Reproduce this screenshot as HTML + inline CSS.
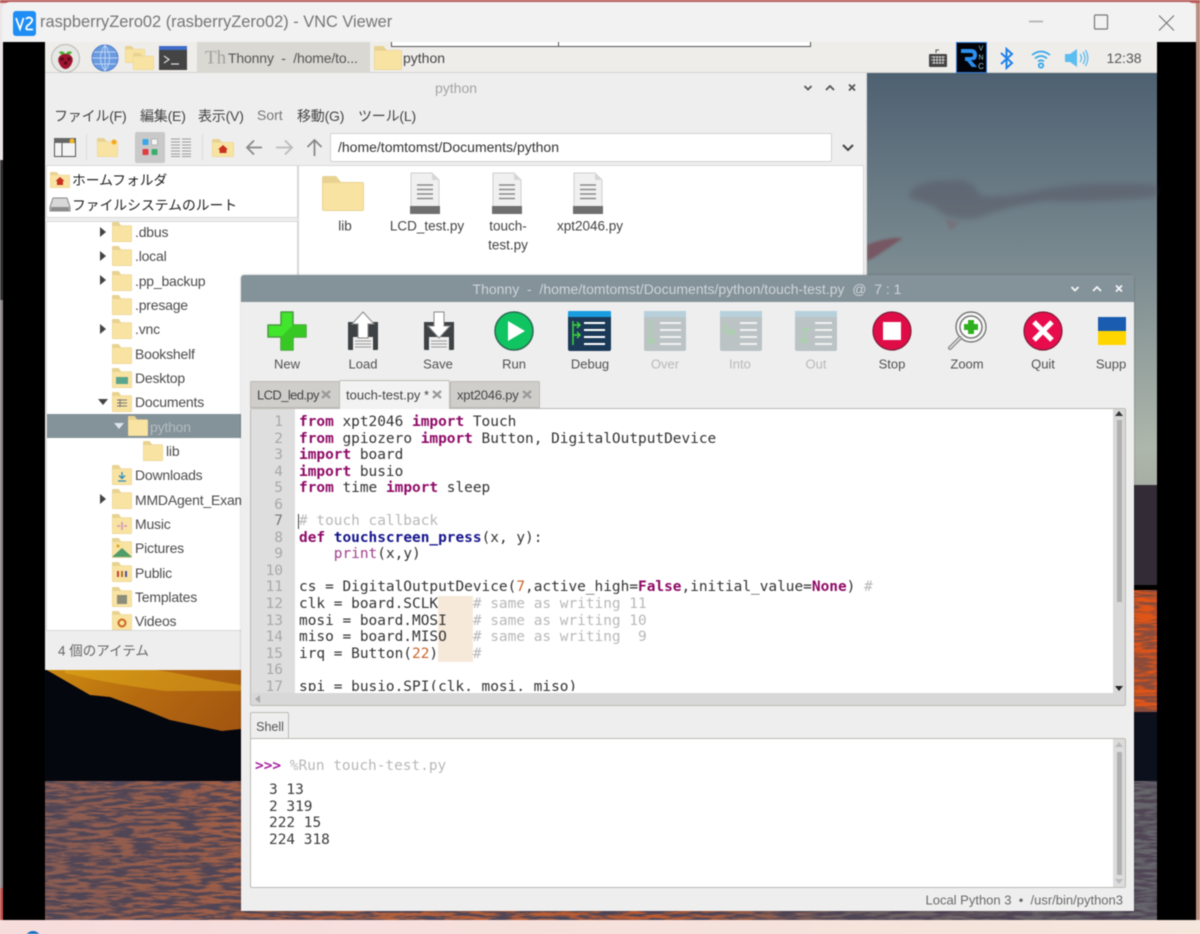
<!DOCTYPE html>
<html lang="ja">
<head>
<meta charset="utf-8">
<title>raspberryZero02 - VNC Viewer</title>
<style>
html,body{margin:0;padding:0;width:1200px;height:934px;overflow:hidden;background:#f5e0dc}
#r{position:absolute;left:0;top:0;width:1200px;height:934px;overflow:hidden;filter:blur(.4px);font-family:"Liberation Sans","Noto Sans CJK JP",sans-serif}
.b{position:absolute}
.t,.c{position:absolute;white-space:pre;line-height:1;font-size:14px;color:#444}
.t{transform:translate(0,-50%)}
.c{transform:translate(-50%,-50%)}
svg{position:absolute;overflow:visible}
pre{position:absolute;margin:0;font-family:"DejaVu Sans Mono","Liberation Mono",monospace;font-size:14.45px;line-height:16.55px;color:#333}
.k{color:#8f0a66;font-weight:bold}
.f{color:#14148c;font-weight:bold}
.g{color:#b8b8b8}
.n{color:#c8642a}
.p{color:#a0408c}
.tr{font-size:14px;color:#4c4c4c;letter-spacing:-.2px}
.l{font-size:13px;color:#505050}
.d{font-size:13px;color:#b9b9b9}
.fl{font-size:13.5px}
</style>
</head>
<body>
<div id="r">
<svg width="0" height="0" style="position:absolute">
<defs>
<symbol id="fo" viewBox="0 0 42 35" preserveAspectRatio="none"><path d="M0 2Q0 0 2 0H14L19 6H40Q42 6 42 8V33Q42 35 40 35H2Q0 35 0 33Z" fill="#e8d291"/><path d="M1 7H41V33Q41 34 40 34H2Q1 34 1 33Z" fill="#f9e3a2"/></symbol>
<symbol id="doc" viewBox="0 0 30 42"><path d="M1 1H22L29 8V41H1Z" fill="#f0f0f0" stroke="#cfcfcf"/><path d="M22 1V8H29Z" fill="#d6d6d6"/><path d="M7 13H23M7 17.500H23M7 22H23M7 26.500H23" stroke="#8a8a8a" stroke-width="1.500"/><path d="M0 34H30V42H0Z" fill="#6f6f6f"/></symbol>
<filter id="w" x="0" y="0" width="100%" height="100%"><feTurbulence type="fractalNoise" baseFrequency=".045 .3" numOctaves="4" seed="11"/><feColorMatrix values="0 0 0 0 .08 0 0 0 0 .06 0 0 0 0 .09 4.500 0 0 0 -1.750"/></filter>
<filter id="s1" x="-10%" y="-30%" width="120%" height="160%"><feGaussianBlur stdDeviation="3"/></filter>
<filter id="s2" x="-30%" y="-50%" width="160%" height="200%"><feGaussianBlur stdDeviation="1.200"/></filter>
<linearGradient id="wg" x1="0" x2="1" y1="0" y2="0"><stop offset="0" stop-color="#8a5c52"/><stop offset=".3" stop-color="#b0603e"/><stop offset=".55" stop-color="#bd5a30"/><stop offset=".72" stop-color="#6e6062"/><stop offset="1" stop-color="#66666c"/></linearGradient>
<linearGradient id="sky" x1="0" x2="0" y1="0" y2="1"><stop offset="0" stop-color="#4e6172"/><stop offset=".45" stop-color="#7a8a90"/><stop offset=".9" stop-color="#aeb7ab"/><stop offset="1" stop-color="#a6aca2"/></linearGradient>
<linearGradient id="og" x1="0" x2="1" y1="0" y2=".6"><stop offset="0" stop-color="#cf9010"/><stop offset=".5" stop-color="#b66a10"/><stop offset="1" stop-color="#a05410"/></linearGradient>
</defs>
</svg>

<!-- outer edges -->
<div class="b" style="left:0;top:0;width:1200px;height:3px;background:#b85c5c"></div>
<div class="b" style="left:0;top:3px;width:3px;height:917px;background:#e8e8e8"></div>
<div class="b" style="left:0;top:160px;width:3px;height:140px;background:#333"></div>
<div class="b" style="left:0;top:300px;width:3px;height:590px;background:#888"></div>
<div class="b" style="left:0;top:888px;width:3px;height:32px;background:#c0504c"></div>
<div class="b" style="left:1196px;top:3px;width:4px;height:917px;background:#b88f80"></div>
<div class="b" style="left:0;top:920px;width:1200px;height:14px;background:linear-gradient(90deg,#f7dcdc,#f5e6dc)"></div>
<div class="b" style="left:25px;top:931px;width:16px;height:16px;border-radius:8px;background:#1670c8"></div>

<!-- vnc window -->
<div class="b" style="left:3px;top:42px;width:1193px;height:878px;background:#000"></div>
<div class="b" style="left:2px;top:2px;width:1194px;height:40px;background:#f2f2f2;border-radius:8px 8px 0 0"></div>
<svg style="left:13px;top:11px" width="23" height="25" viewBox="0 0 23 25"><rect width="23" height="25" rx="3" fill="#1e8ef4"/><path d="M3 7L7 18L10.500 7M13 8Q16 5 18.500 7.500T14 15Q12.500 18 14 18.500H20" fill="none" stroke="#fff" stroke-width="1.800"/></svg>
<span class="t" style="left:40px;top:22px;font-size:16.4px;color:#767676">raspberryZero02 (rasberryZero02) - VNC Viewer</span>
<svg style="left:1029px;top:14px" width="146" height="20" viewBox="0 0 146 20" fill="none" stroke="#777" stroke-width="1.200"><path d="M0 7.500H14" stroke="#aaa" stroke-width="1.500"/><rect x="65.500" y="1" width="13" height="14" rx="1"/><path d="M130 1.500L145 16.500M145 1.500L130 16.500"/></svg>

<!-- wallpaper -->
<svg style="left:45px;top:73px" width="1112" height="847" viewBox="0 0 1112 847">
<rect width="1112" height="417" fill="url(#sky)"/>
<rect y="412" width="1112" height="100" fill="#332c36"/>
<rect y="517" width="1112" height="122" fill="#df5518"/>
<rect y="517" width="1112" height="122" filter="url(#w)" opacity=".6"/>
<rect y="639" width="1112" height="70" fill="#0b101c"/>
<rect y="580" width="200" height="130" fill="url(#og)"/>
<path d="M20 597Q90 592 130 600T196 612V618H120Q60 610 20 600Z" fill="#e6b41c" opacity=".45"/>
<path d="M0 596L45 622L65 624L95 635L125 647L177 658L196 656V710H0Z" fill="#05070f"/>
<rect y="708" width="1112" height="139" fill="url(#wg)"/>
<rect y="708" width="1112" height="139" filter="url(#w)"/>
<path d="M865 118Q880 106 905 108Q925 104 935 122Q950 126 1000 116Q1040 108 1112 112V124Q1050 130 1000 128Q960 134 930 146Q900 148 890 134Q875 128 865 126Z" fill="#4a3e4c" opacity=".3" filter="url(#s1)"/>
<path d="M822 172Q840 164 858 165Q845 174 830 184L822 188Z" fill="#77505c" opacity=".85" filter="url(#s2)"/>
<path d="M900 146L915 150L905 158Z" fill="#7a5a64" opacity=".35" filter="url(#s2)"/>
</svg>

<!-- panel -->
<div class="b" style="left:45px;top:42px;width:1112px;height:31px;background:#efedea;border-bottom:1px solid #d6d4d0;box-sizing:border-box"></div>
<div class="b" style="left:391px;top:42px;width:420px;height:5px;background:#fff;border:1px solid #555;border-top:0;box-sizing:border-box"></div>
<div class="b" style="left:558px;top:42px;width:1px;height:5px;background:#555"></div>
<div class="b" style="left:197px;top:42px;width:173px;height:31px;background:#d9d8d3"></div>
<svg style="left:51px;top:44px" width="29" height="29" viewBox="0 0 29 29"><circle cx="14.500" cy="14.500" r="14" fill="#e6e8e4" stroke="#b8b8b8"/><path d="M8 8Q12 6 14.500 10Q17 6 21 8Q19 12 14.500 11Q10 12 8 8Z" fill="#4fae38"/><path d="M14.500 10C21 10 23 15 21 19C19 24 16 25 14.500 25C13 25 10 24 8 19C6 15 8 10 14.500 10Z" fill="#a01430"/><circle cx="11" cy="15" r="1.800" fill="#5c0a1c"/><circle cx="18" cy="15" r="1.800" fill="#5c0a1c"/><circle cx="14.500" cy="19" r="1.800" fill="#5c0a1c"/></svg>
<svg style="left:91px;top:44px" width="28" height="28" viewBox="0 0 28 28" fill="none"><circle cx="14" cy="14" r="13" fill="#6a9ae0" stroke="#4c7cc6"/><path d="M1 14H27M3 8H25M3 20H25M14 1V27M14 1Q5 14 14 27M14 1Q23 14 14 27" stroke="#bcd4f4"/></svg>
<svg style="left:125px;top:46px" width="29" height="24" viewBox="0 0 29 24"><use href="#fo" width="20" height="17"/><use href="#fo" x="8" y="7" width="21" height="17"/></svg>
<svg style="left:159px;top:46px" width="28" height="24" viewBox="0 0 28 24"><rect width="28" height="24" fill="#444"/><rect width="28" height="4" fill="#3f6cc8"/><path d="M5 10L10 13.500L5 17M12 18H20" fill="none" stroke="#ddd" stroke-width="1.200"/></svg>
<span class="t" style="left:205px;top:58px;font-family:'Liberation Serif',serif;font-size:19px;color:#a2a29e">Th</span>
<span class="t" style="left:228px;top:58px;font-size:14px;color:#555;letter-spacing:-.15px">Thonny  -  /home/to...</span>
<svg style="left:374px;top:46px" width="28" height="24"><use href="#fo" width="28" height="24"/></svg>
<span class="t" style="left:403px;top:58px;color:#444">python</span>
<svg style="left:929px;top:49px" width="18" height="18" viewBox="0 0 18 18"><path d="M7 4V1H10" fill="none" stroke="#555"/><rect y="5" width="18" height="13" rx="1" fill="#444"/><path d="M2 8H16M2 11H16M3 14H15M5 7V15M8 7V15M11 7V15M14 7V15" stroke="#ddd" stroke-width=".8"/></svg>
<svg style="left:956px;top:42px" width="31" height="31" viewBox="0 0 31 31"><rect x=".5" y=".5" width="30" height="30" fill="#02040a" stroke="#2a78d8"/><path d="M5 7H15Q21 7 21 13T15 18L21 25H16L11 19H9V15H15Q17 15 17 13T15 11H5Z" fill="#2b8ff0"/></svg>
<span class="c" style="left:981px;top:49px;font-size:7px;color:#9cc">V</span>
<span class="c" style="left:981px;top:58px;font-size:7px;color:#9cc">N</span>
<span class="c" style="left:981px;top:67px;font-size:8px;color:#9cc">C</span>
<svg style="left:999px;top:47px" width="16" height="23" viewBox="0 0 16 23" fill="none" stroke="#1e82ea" stroke-width="2"><path d="M2 6L13 16L7.500 21V2L13 7L2 17"/></svg>
<svg style="left:1031px;top:49px" width="20" height="20" viewBox="0 0 20 20" fill="none" stroke="#35a8ec" stroke-width="1.600"><path d="M1 6Q10 -1 19 6M4 9.500Q10 4.500 16 9.500M7 12.500Q10 10 13 12.500"/><circle cx="10" cy="16.500" r="2.200" stroke-width="1.800"/></svg>
<svg style="left:1065px;top:48px" width="24" height="20" viewBox="0 0 24 20" fill="none"><path d="M0 6H5L12 1V19L5 14H0Z" fill="#5cbdf0"/><path d="M15 6Q18 10 15 14M18 4Q22 10 18 16M20.500 2Q25 10 20.500 18" stroke="#5cbdf0" stroke-width="1.300"/></svg>
<span class="c" style="left:1124px;top:58px;color:#555">12:38</span>

<!-- file manager -->
<div class="b" style="left:45px;top:73px;width:822px;height:597px;background:#eeeeee;border-right:1px solid #ddd;box-sizing:border-box"></div>
<span class="c" style="left:456px;top:88px;color:#a4a4a4">python</span>
<svg style="left:803px;top:83px" width="56" height="10" viewBox="0 0 56 10" fill="none" stroke="#555" stroke-width="1.800"><path d="M1.500 3L5 6.500L8.500 3M23 7L27 3L31 7M46 1.500L52 7.500M52 1.500L46 7.500"/></svg>
<span class="t" style="left:54px;top:116px;letter-spacing:-.2px">ファイル(F)</span>
<span class="t" style="left:140px;top:116px;letter-spacing:-.2px">編集(E)</span>
<span class="t" style="left:198px;top:116px;letter-spacing:-.2px">表示(V)</span>
<span class="t" style="left:257px;top:115px;color:#777">Sort</span>
<span class="t" style="left:297px;top:116px;letter-spacing:-.2px">移動(G)</span>
<span class="t" style="left:358px;top:116px;letter-spacing:-.2px">ツール(L)</span>

<svg style="left:54px;top:138px" width="22" height="19" viewBox="0 0 22 19"><rect x=".5" y=".5" width="21" height="18" fill="#f4f4f4" stroke="#555"/><rect width="22" height="5" fill="#666"/><path d="M8 5V18" stroke="#555"/><circle cx="18" cy="3" r="2.500" fill="#f4b820"/></svg>
<div class="b" style="left:86px;top:134px;width:1px;height:26px;background:#dcdcdc"></div>
<svg style="left:97px;top:138px" width="21" height="19"><use href="#fo" width="21" height="19"/><circle cx="17" cy="4" r="2.500" fill="#f4a820"/></svg>
<div class="b" style="left:135px;top:132px;width:30px;height:31px;background:#c9c9c9;border-radius:2px"></div>
<svg style="left:142px;top:138px" width="16" height="19" viewBox="0 0 16 19"><rect x=".5" y="1" width="6" height="6" rx="1" fill="#3ea6e8"/><rect x="9.500" y="1" width="6" height="6" rx="1" fill="#f4f4f4" stroke="#888" stroke-width=".5"/><rect x=".5" y="11" width="6" height="6" rx="1" fill="#e03c40"/><rect x="9.500" y="11" width="6" height="6" rx="1" fill="#3cae6c"/></svg>
<svg style="left:171px;top:138px" width="20" height="19" viewBox="0 0 20 19"><path d="M0 1H9M0 4H9M0 7H9M0 10H9M0 13H9M0 16H9M0 18.500H9M11 1H20M11 4H20M11 7H20M11 10H20M11 13H20M11 16H20M11 18.500H20" stroke="#9a9a9a"/></svg>
<div class="b" style="left:202px;top:134px;width:1px;height:26px;background:#dcdcdc"></div>
<svg style="left:212px;top:139px" width="22" height="18" viewBox="0 0 22 18"><use href="#fo" width="22" height="18"/><path d="M11 6L16 10.500H14.500V14H7.500V10.500H6Z" fill="#c8321e"/></svg>
<svg style="left:245px;top:138px" width="80" height="19" viewBox="0 0 80 19" fill="none" stroke-width="1.800"><path d="M17 9.500H2M9 2.500L2 9.500L9 16.500" stroke="#888"/><path d="M31 9.500H47M40 2.500L47 9.500L40 16.500" stroke="#bbb"/><path d="M69.500 18V2M62.500 9L69.500 2L76.500 9" stroke="#888"/></svg>
<div class="b" style="left:330px;top:133px;width:502px;height:29px;background:#fff;border:1px solid #d2d2d2;box-sizing:border-box;border-radius:2px"></div>
<span class="t" style="left:338px;top:147px;color:#333">/home/tomtomst/Documents/python</span>
<svg style="left:842px;top:143px" width="12" height="9" viewBox="0 0 12 9" fill="none" stroke="#444" stroke-width="2"><path d="M1 2L6 7L11 2"/></svg>

<div class="b" style="left:47px;top:166px;width:250px;height:51px;background:#fff;box-shadow:0 0 0 1px #d8d8d8"></div>
<svg style="left:50px;top:172px" width="20" height="16" viewBox="0 0 20 16"><use href="#fo" width="20" height="16"/><path d="M10 5L14.500 9H13V13H7V9H5.500Z" fill="#c8321e"/></svg>
<span class="t" style="left:72px;top:181px;color:#222;font-size:13.800px">ホームフォルダ</span>
<svg style="left:50px;top:197px" width="20" height="15" viewBox="0 0 20 15"><path d="M3 1H17L20 10V14H0V10Z" fill="#d8d8d8" stroke="#888"/><rect x="1" y="10" width="18" height="4" fill="#8c8c8c"/></svg>
<span class="t" style="left:72px;top:206px;color:#222;font-size:13.800px">ファイルシステムのルート</span>

<div class="b" style="left:47px;top:222px;width:250px;height:408px;background:#fff;box-shadow:0 0 0 1px #d8d8d8"></div>
<div class="b" style="left:47px;top:414px;width:250px;height:24px;background:#84929a"></div>

<svg style="left:100px;top:226px" width="7" height="12"><path d="M0 1L6 6L0 11Z" fill="#444"/></svg>
<svg style="left:100px;top:250px" width="7" height="12"><path d="M0 1L6 6L0 11Z" fill="#444"/></svg>
<svg style="left:100px;top:274px" width="7" height="12"><path d="M0 1L6 6L0 11Z" fill="#444"/></svg>
<svg style="left:100px;top:323px" width="7" height="12"><path d="M0 1L6 6L0 11Z" fill="#444"/></svg>
<svg style="left:97px;top:399px" width="12" height="7"><path d="M1 0H11L6 6Z" fill="#444"/></svg>
<svg style="left:100px;top:493px" width="7" height="12"><path d="M0 1L6 6L0 11Z" fill="#444"/></svg>
<svg style="left:113px;top:423px" width="12" height="7"><path d="M1 0H11L6 6Z" fill="#dde6ec"/></svg>

<svg style="left:112px;top:222px" width="20" height="20"><use href="#fo" width="20" height="20"/></svg>
<svg style="left:112px;top:246px" width="20" height="20"><use href="#fo" width="20" height="20"/></svg>
<svg style="left:112px;top:271px" width="20" height="20"><use href="#fo" width="20" height="20"/></svg>
<svg style="left:112px;top:295px" width="20" height="20"><use href="#fo" width="20" height="20"/></svg>
<svg style="left:112px;top:319px" width="20" height="20"><use href="#fo" width="20" height="20"/></svg>
<svg style="left:112px;top:344px" width="20" height="20"><use href="#fo" width="20" height="20"/></svg>
<svg style="left:112px;top:368px" width="20" height="20"><use href="#fo" width="20" height="20"/><rect x="4" y="9" width="12" height="7" fill="#5aa58c"/></svg>
<svg style="left:112px;top:392px" width="20" height="20"><use href="#fo" width="20" height="20"/><path d="M5 8H15M5 11H15M5 14H15M8 7V15" stroke="#777"/></svg>
<svg style="left:128px;top:416px" width="20" height="20"><use href="#fo" width="20" height="20"/></svg>
<svg style="left:143px;top:441px" width="20" height="20"><use href="#fo" width="20" height="20"/></svg>
<svg style="left:112px;top:465px" width="20" height="20"><use href="#fo" width="20" height="20"/><path d="M10 7V13M7 10.500L10 13.500L13 10.500M6 16H14" fill="none" stroke="#2a8cc0" stroke-width="1.300"/></svg>
<svg style="left:112px;top:489px" width="20" height="20"><use href="#fo" width="20" height="20"/></svg>
<svg style="left:112px;top:514px" width="20" height="20"><use href="#fo" width="20" height="20"/><path d="M5 12H8M12 12H15M10 8V16" stroke="#d090c0" stroke-width="1.500"/></svg>
<svg style="left:112px;top:538px" width="20" height="20"><use href="#fo" width="20" height="20"/><path d="M0 19L10 10L20 19Z" fill="#4f9c68"/><circle cx="6" cy="8" r="1.500" fill="#e0a020"/></svg>
<svg style="left:112px;top:562px" width="20" height="20"><use href="#fo" width="20" height="20"/><path d="M6 9V15" stroke="#c04040" stroke-width="2"/><path d="M10 9V15" stroke="#b07020" stroke-width="2"/><path d="M14 9V15" stroke="#5050a0" stroke-width="2"/></svg>
<svg style="left:112px;top:587px" width="20" height="20"><use href="#fo" width="20" height="20"/><rect x="5" y="8" width="10" height="9" fill="#8c8c7a"/></svg>
<svg style="left:112px;top:611px" width="20" height="19"><use href="#fo" width="20" height="19"/><circle cx="10" cy="12" r="3.500" fill="none" stroke="#cc6a20" stroke-width="2"/></svg>

<span class="t tr" style="left:135px;top:232px">.dbus</span>
<span class="t tr" style="left:135px;top:256px">.local</span>
<span class="t tr" style="left:135px;top:281px">.pp_backup</span>
<span class="t tr" style="left:135px;top:305px">.presage</span>
<span class="t tr" style="left:135px;top:329px">.vnc</span>
<span class="t tr" style="left:135px;top:354px">Bookshelf</span>
<span class="t tr" style="left:135px;top:378px">Desktop</span>
<span class="t tr" style="left:135px;top:402px">Documents</span>
<span class="t tr" style="left:150px;top:427px;color:#b4bcc0">python</span>
<span class="t tr" style="left:166px;top:451px">lib</span>
<span class="t tr" style="left:135px;top:475px">Downloads</span>
<span class="t tr" style="left:135px;top:500px">MMDAgent_Exam</span>
<span class="t tr" style="left:135px;top:524px">Music</span>
<span class="t tr" style="left:135px;top:548px">Pictures</span>
<span class="t tr" style="left:135px;top:573px">Public</span>
<span class="t tr" style="left:135px;top:597px">Templates</span>
<span class="t tr" style="left:135px;top:621px">Videos</span>
<span class="t" style="left:58px;top:651px;color:#666;font-size:13.500px">4 個のアイテム</span>

<div class="b" style="left:299px;top:166px;width:564px;height:504px;background:#fff;box-shadow:0 0 0 1px #d8d8d8"></div>
<svg style="left:322px;top:176px" width="42" height="35"><use href="#fo" width="42" height="35"/></svg>
<svg style="left:410px;top:172px" width="30" height="42"><use href="#doc" width="30" height="42"/></svg>
<svg style="left:492px;top:172px" width="30" height="42"><use href="#doc" width="30" height="42"/></svg>
<svg style="left:573px;top:172px" width="30" height="42"><use href="#doc" width="30" height="42"/></svg>
<span class="c fl" style="left:345px;top:226px">lib</span>
<span class="c fl" style="left:427px;top:226px">LCD_test.py</span>
<span class="c fl" style="left:508px;top:226px">touch-</span>
<span class="c fl" style="left:508px;top:245px">test.py</span>
<span class="c fl" style="left:590px;top:226px">xpt2046.py</span>

<!-- thonny -->
<div class="b" style="left:241px;top:275px;width:893px;height:636px;background:#eeeeee;border-radius:3px 3px 0 0;box-shadow:0 0 2px rgba(0,0,0,.25)"></div>
<div class="b" style="left:241px;top:275px;width:893px;height:27px;background:#84929a;border-radius:3px 3px 0 0"></div>
<span class="c" style="left:687px;top:289px;color:#ced5d9;font-size:14px">Thonny  -  /home/tomtomst/Documents/python/touch-test.py  @  7 : 1</span>
<svg style="left:1070px;top:284px" width="56" height="10" viewBox="0 0 56 10" fill="none" stroke="#f4f6f7" stroke-width="1.800"><path d="M1.500 3L5 6.500L8.500 3M23 7L27 3L31 7M46 1.500L52 7.500M52 1.500L46 7.500"/></svg>

<!-- toolbar icons -->
<svg style="left:267px;top:311px" width="40" height="40" viewBox="0 0 40 40"><path d="M14 1H26V14H39V26H26V39H14V26H1V14H14Z" fill="#40e52c" stroke="#4a9c40" stroke-linejoin="round" stroke-width="1.500"/><path d="M26 14H39V26H26V39H14V26Z" fill="#38c826"/></svg>
<svg style="left:347px;top:311px" width="32" height="40" viewBox="0 0 32 40"><path d="M1 11H31V38Q31 39 30 39H2Q1 39 1 38Z" fill="#3e4244"/><rect x="6" y="26" width="20" height="13" fill="#eee"/><path d="M8 30H24M8 33H24M8 36H24" stroke="#999"/><path d="M16 1L27 13H21V27H11V13H5Z" fill="#fff" stroke="#888"/></svg>
<svg style="left:423px;top:311px" width="32" height="40" viewBox="0 0 32 40"><path d="M1 11H31V38Q31 39 30 39H2Q1 39 1 38Z" fill="#3e4244"/><rect x="6" y="26" width="20" height="13" fill="#eee"/><path d="M8 30H24M8 33H24M8 36H24" stroke="#999"/><path d="M11 1H21V15H27L16 27L5 15H11Z" fill="#fff" stroke="#888"/></svg>
<svg style="left:494px;top:311px" width="40" height="40" viewBox="0 0 40 40"><circle cx="20" cy="20" r="19" fill="#10c462" stroke="#2a6a50" stroke-width="1.500"/><path d="M14 10L31 20L14 30Z" fill="#fff"/></svg>
<svg style="left:568px;top:311px" width="43" height="40" viewBox="0 0 43 40"><rect width="43" height="40" rx="2" fill="#1b3a58"/><rect width="43" height="6" rx="1" fill="#1a9ce0"/><path d="M16 12H37M16 19H37M16 26H37M16 33H37" stroke="#fff" stroke-width="2"/><path d="M5 10V34M5 14H12M9 11L12 14L9 17M5 24H12M9 21L12 24L9 27" fill="none" stroke="#3ed43c" stroke-width="1.500"/></svg>
<svg style="left:644px;top:311px" width="42" height="40" viewBox="0 0 42 40"><rect width="42" height="40" rx="2" fill="#bcc3c5"/><rect width="42" height="6" fill="#b7d0dc"/><path d="M16 12H37M16 19H37M16 26H37M16 33H37" stroke="#f2f2f2" stroke-width="2"/><path d="M7 9V33M3 28L7 33L11 28" fill="none" stroke="#a8d4a8" stroke-width="1.800"/></svg>
<svg style="left:720px;top:311px" width="42" height="40" viewBox="0 0 42 40"><rect width="42" height="40" rx="2" fill="#bcc3c5"/><rect width="42" height="6" fill="#b7d0dc"/><path d="M20 12H37M20 19H37M20 26H37M20 33H37" stroke="#f2f2f2" stroke-width="2"/><path d="M5 13V21H14M10 17L14 21L10 25" fill="none" stroke="#a8d4a8" stroke-width="1.800"/></svg>
<svg style="left:795px;top:311px" width="42" height="40" viewBox="0 0 42 40"><rect width="42" height="40" rx="2" fill="#bcc3c5"/><rect width="42" height="6" fill="#b7d0dc"/><path d="M20 12H37M20 19H37M20 26H37M20 33H37" stroke="#f2f2f2" stroke-width="2"/><path d="M16 18H9V32M5 28L9 32L13 28" fill="none" stroke="#a8d4a8" stroke-width="1.800"/></svg>
<svg style="left:872px;top:311px" width="40" height="40" viewBox="0 0 40 40"><circle cx="20" cy="20" r="19" fill="#e00c48" stroke="#7a1c36" stroke-width="1.200"/><rect x="11" y="11" width="18" height="18" fill="#fff"/></svg>
<svg style="left:947px;top:311px" width="41" height="40" viewBox="0 0 41 40"><circle cx="24" cy="16" r="15" fill="#f4f4f4" stroke="#666" stroke-width="1.200"/><circle cx="24" cy="16" r="11" fill="#fff" stroke="#777" stroke-width="1.500"/><path d="M21 9H27V13H31V19H27V23H21V19H17V13H21Z" fill="#30b020"/><path d="M13 27L3 37" stroke="#888" stroke-width="4" stroke-linecap="round"/><path d="M13 27L3 37" stroke="#e4e4e4" stroke-width="1.500" stroke-linecap="round"/></svg>
<svg style="left:1023px;top:311px" width="40" height="40" viewBox="0 0 40 40"><circle cx="20" cy="20" r="19" fill="#e80c4c" stroke="#7a1c36" stroke-width="1.200"/><path d="M11 11L29 29M29 11L11 29" stroke="#fff" stroke-width="5"/></svg>
<svg style="left:1098px;top:317px" width="28" height="28" viewBox="0 0 28 28"><rect width="28" height="14" fill="#1a5cb0"/><rect y="14" width="28" height="14" fill="#ffd500"/></svg>

<span class="c l" style="left:287px;top:364px">New</span>
<span class="c l" style="left:363px;top:364px">Load</span>
<span class="c l" style="left:438px;top:364px">Save</span>
<span class="c l" style="left:514px;top:364px">Run</span>
<span class="c l" style="left:590px;top:364px">Debug</span>
<span class="c d" style="left:665px;top:364px">Over</span>
<span class="c d" style="left:740px;top:364px">Into</span>
<span class="c d" style="left:816px;top:364px">Out</span>
<span class="c l" style="left:892px;top:364px">Stop</span>
<span class="c l" style="left:967px;top:364px">Zoom</span>
<span class="c l" style="left:1043px;top:364px">Quit</span>
<span class="c l" style="left:1111px;top:364px">Supp</span>

<!-- tabs -->
<div class="b" style="left:250px;top:381px;width:90px;height:27px;background:#cfcecb;border:1px solid #bcbab4;box-sizing:border-box;border-radius:2px 2px 0 0"></div>
<div class="b" style="left:450px;top:381px;width:90px;height:27px;background:#cfcecb;border:1px solid #bcbab4;box-sizing:border-box;border-radius:2px 2px 0 0"></div>
<div class="b" style="left:339px;top:380px;width:111px;height:29px;background:#f2f2f2;border:1px solid #bcbab4;border-bottom:0;box-sizing:border-box;border-radius:2px 2px 0 0;z-index:2"></div>
<span class="t" style="left:257px;top:395px;font-size:13px;color:#444;letter-spacing:-.6px">LCD_led.py</span>
<span class="t" style="left:346px;top:395px;font-size:13px;color:#444;z-index:3">touch-test.py *</span>
<span class="t" style="left:457px;top:395px;font-size:13px;color:#444;letter-spacing:-.2px">xpt2046.py</span>
<svg style="left:321px;top:390px" width="10" height="9" fill="none" stroke="#999" stroke-width="2.200"><path d="M1 1L9 8M9 1L1 8"/></svg>
<svg style="left:432px;top:390px;z-index:3" width="10" height="9" fill="none" stroke="#999" stroke-width="2.200"><path d="M1 1L9 8M9 1L1 8"/></svg>
<svg style="left:522px;top:390px" width="10" height="9" fill="none" stroke="#999" stroke-width="2.200"><path d="M1 1L9 8M9 1L1 8"/></svg>

<!-- editor -->
<div class="b" style="left:250px;top:408px;width:876px;height:298px;background:#fff;border:1px solid #bcbab4;box-sizing:border-box;border-radius:2px"></div>
<div class="b" style="left:251px;top:409px;width:44px;height:284px;background:#dedede"></div>
<div class="b" style="left:438px;top:596px;width:35px;height:66px;background:#f6e9da"></div>
<div class="b" style="left:251px;top:693px;width:874px;height:12px;background:#d8d8d8"></div>
<div class="b" style="left:1113px;top:409px;width:12px;height:296px;background:#d8d8d8"></div>
<div class="b" style="left:1117px;top:420px;width:5px;height:182px;background:#b0b0b0"></div>
<svg style="left:1114px;top:410px" width="10" height="7"><path d="M1 6H9L5 1Z" fill="#333"/></svg>
<svg style="left:1114px;top:686px" width="10" height="6"><path d="M1 0H9L5 5Z" fill="#222"/></svg>
<svg style="left:255px;top:695px" width="6" height="9"><path d="M5 0V8L0 4Z" fill="#aaa"/></svg>
<div class="b" style="left:251px;top:409px;width:862px;height:282px;overflow:hidden">
<pre style="left:0;top:5px;width:32px;text-align:right;color:#a8a8a8;font-size:14.450px">1
2
3
4
5
6
<span style="color:#777">7</span>
8
9
10
11
12
13
14
15
16
17</pre>
<pre style="left:48px;top:5px"><span class="k">from</span> xpt2046 <span class="k">import</span> Touch
<span class="k">from</span> gpiozero <span class="k">import</span> Button, DigitalOutputDevice
<span class="k">import</span> board
<span class="k">import</span> busio
<span class="k">from</span> time <span class="k">import</span> sleep

<span class="g"># touch callback</span>
<span class="k">def</span> <span class="f">touchscreen_press</span>(x, y):
    <span class="p">print</span>(x,y)

cs = DigitalOutputDevice(<span class="n">7</span>,active_high=<span class="k">False</span>,initial_value=<span class="k">None</span>) <span class="g">#</span>
clk = board.SCLK    <span class="g"># same as writing 11</span>
mosi = board.MOSI   <span class="g"># same as writing 10</span>
miso = board.MISO   <span class="g"># same as writing  9</span>
irq = Button(<span class="n">22</span>)    <span class="g">#</span>

spi = busio.SPI(clk, mosi, miso)</pre>
<div class="b" style="left:47px;top:105px;width:1px;height:15px;background:#444"></div>
</div>

<!-- shell -->
<div class="b" style="left:250px;top:712px;width:39px;height:27px;background:#eeeeee;border:1px solid #bcbab4;border-bottom:0;box-sizing:border-box;border-radius:2px 2px 0 0"></div>
<span class="c" style="left:270px;top:727px;font-size:12.500px;color:#555">Shell</span>
<div class="b" style="left:250px;top:738px;width:876px;height:150px;background:#fff;border:1px solid #bcbab4;box-sizing:border-box;border-radius:2px"></div>
<div class="b" style="left:1113px;top:739px;width:12px;height:148px;background:#dcdcdc"></div>
<div class="b" style="left:1117px;top:752px;width:5px;height:123px;background:#b0b0b0"></div>
<svg style="left:1114px;top:742px" width="10" height="6"><path d="M1 5H9L5 0Z" fill="#bbb"/></svg>
<svg style="left:1114px;top:879px" width="10" height="6"><path d="M1 0H9L5 5Z" fill="#bbb"/></svg>
<pre style="left:255px;top:758px"><span style="color:#a822a0;font-weight:bold">&gt;&gt;&gt;</span> <span class="g">%Run touch-test.py</span></pre>
<pre style="left:269px;top:782px;color:#3c3c3c">3 13
2 319
222 15
224 318</pre>
<span class="t" style="right:77px;top:900px;font-size:13px;color:#6a6a6a">Local Python 3  •  /usr/bin/python3</span>
</div>
</body>
</html>
